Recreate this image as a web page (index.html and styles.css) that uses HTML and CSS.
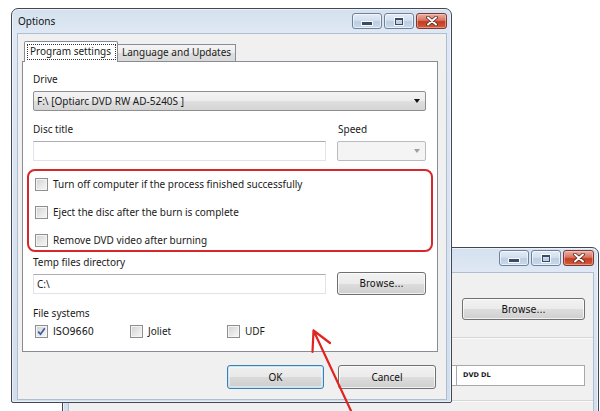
FILE: index.html
```html
<!DOCTYPE html>
<html>
<head>
<meta charset="utf-8">
<link rel="stylesheet" href="styles.css">
</head>
<body>
<div class="desk">

  <div class="win back">
    <div class="titlebar back-tb">
      <div class="caps">
        <div class="cap min"><i></i></div>
        <div class="cap max"><i></i></div>
        <div class="cap close"><svg width="14" height="10" viewBox="0 0 14 10"><path d="M3 1.5 L11 8.5 M11 1.5 L3 8.5" stroke="#5a2620" stroke-width="3.6" stroke-linecap="round"/><path d="M3 1.5 L11 8.5 M11 1.5 L3 8.5" stroke="#fff" stroke-width="2" stroke-linecap="round"/></svg></div>
      </div>
    </div>
    <div class="client back-client">
      <div class="btn back-browse">Browse...</div>
      <div class="sep"></div>
      <div class="dvdrow"><div class="cell-left"></div><div class="cell-dvd">DVD DL</div></div>
      <div class="sep sep2"></div>
    </div>
  </div>

  <div class="win main">
    <div class="titlebar">
      <span class="title">Options</span>
      <div class="caps">
        <div class="cap min"><i></i></div>
        <div class="cap max"><i></i></div>
        <div class="cap close"><svg width="14" height="10" viewBox="0 0 14 10"><path d="M3 1.5 L11 8.5 M11 1.5 L3 8.5" stroke="#5a2620" stroke-width="3.6" stroke-linecap="round"/><path d="M3 1.5 L11 8.5 M11 1.5 L3 8.5" stroke="#fff" stroke-width="2" stroke-linecap="round"/></svg></div>
      </div>
    </div>
    <div class="client">
      <div class="tabs">
        <div class="tab sel"><span class="focus">Program settings</span></div>
        <div class="tab">Language and Updates</div>
      </div>
      <div class="panel">
        <div class="lbl">Drive</div>
        <div class="combo drive"><span>F:\ [Optiarc DVD RW AD-5240S ]</span><i class="tri"></i></div>
        <div class="row2 lblrow"><div class="lbl grow">Disc title</div><div class="lbl speedlbl">Speed</div></div>
        <div class="row2 inrow"><div class="input grow"></div><div class="combo speed"><i class="tri"></i></div></div>
        <div class="hl">
          <div class="cb-row"><span class="cb"></span>Turn off computer if the process finished successfully</div>
          <div class="cb-row"><span class="cb"></span>Eject the disc after the burn is complete</div>
          <div class="cb-row"><span class="cb"></span>Remove DVD video after burning</div>
        </div>
        <div class="lbl temp-lbl">Temp files directory</div>
        <div class="row2 temprow"><div class="input grow">C:\</div><div class="btn browse">Browse...</div></div>
        <div class="lbl fs-lbl">File systems</div>
        <div class="fs-row">
          <div class="cb-row fs fs-iso"><span class="cb"><svg width="11" height="11" viewBox="0 0 11 11"><path d="M2.2 5.6 L4.5 8.2 L8.8 2.2" fill="none" stroke="#3a5ba6" stroke-width="1.7"/></svg></span><span class="iso">ISO9660</span></div>
          <div class="cb-row fs fs-jol"><span class="cb"></span>Joliet</div>
          <div class="cb-row fs"><span class="cb"></span>UDF</div>
        </div>
      </div>
      <div class="actions">
        <div class="btn ok">OK</div>
        <div class="btn cancel">Cancel</div>
      </div>
    </div>
  </div>

  <svg class="arrow" width="600" height="411" viewBox="0 0 600 411">
    <path d="M352 413 L313.5 330.5 M313.5 330.5 L330 343 M313.5 330.5 L312.5 352" fill="none" stroke="#e0241f" stroke-width="2.2" stroke-linecap="round"/>
  </svg>
</div>
</body>
</html>
```

FILE: styles.css
```css
* { box-sizing: border-box; }
html, body { margin: 0; padding: 0; }
body {
  width: 600px;
  height: 411px;
  overflow: hidden;
  background: #fff;
  font-family: "Noto Sans", "Open Sans", sans-serif;
  font-size: 10px;
  color: #1a1a1a;
}
.desk {
  position: relative;
  width: 600px;
  height: 411px;
  overflow: hidden;
}

/* ---------- windows ---------- */
.win {
  position: absolute;
  display: flex;
  flex-direction: column;
  border: 1px solid #414854;
  border-radius: 7px 7px 2px 2px;
  background: linear-gradient(to bottom, #d5e1ef 0, #dfe8f4 24px, #d2deed 100%);
  box-shadow: inset 0 0 0 1px rgba(255,255,255,.55);
}
.main {
  left: 11px;
  top: 8px;
  width: 441px;
  height: 395px;
  padding: 0 4px 2px 5px;
}
.back {
  left: 62px;
  top: 247px;
  width: 537px;
  height: 180px;
  padding: 0 4px 2px 5px;
}

.titlebar {
  height: 24px;
  flex: none;
  display: flex;
  align-items: flex-start;
  justify-content: space-between;
}
.title {
  font-size: 10px;
  color: #111;
  margin: 5px 0 0 1px;
  line-height: 14px;
}
.caps {
  display: flex;
  gap: 2px;
  margin-top: 4px;
  margin-left: auto;
}
.back-tb .caps { margin-top: 2px; margin-right: 0; }
.cap {
  height: 16px;
  width: 30px;
  border: 1px solid #6f819a;
  border-radius: 3px;
  background: linear-gradient(to bottom, #e3ecf7 0, #d2dfee 45%, #bccee4 55%, #c9d9ec 100%);
  box-shadow: inset 0 0 0 1px rgba(255,255,255,.6);
  display: flex;
  align-items: center;
  justify-content: center;
}
.cap.min i {
  display: block;
  width: 10px;
  height: 3px;
  margin-top: 5px;
  background: #3c4a63;
  box-shadow: 0 0 0 1px rgba(255,255,255,.85);
}
.cap.max i {
  display: block;
  width: 8px;
  height: 7px;
  border: 1px solid #3c4a63;
  border-top-width: 2px;
  box-shadow: 0 0 0 1px rgba(255,255,255,.8);
}
.cap.close {
  width: 31px;
  border-color: #7a3a34;
  background: linear-gradient(to bottom, #eab1a6 0, #d9735f 45%, #c33b22 55%, #d45e3f 100%);
  box-shadow: inset 0 0 0 1px rgba(255,220,210,.45);
}

.client {
  flex: none;
  width: 430px;
  height: 367px;
  background: #f0f0f0;
  border: 1px solid #aebdd0;
  display: flex;
  flex-direction: column;
}

/* ---------- tabs ---------- */
.tabs {
  display: flex;
  align-items: flex-end;
  margin: 7px 0 -1px 6px;
  height: 21px;
  position: relative;
  z-index: 1;
}
.tab {
  height: 17px;
  margin-bottom: 1px;
  border: 1px solid #898c95;
  border-bottom: none;
  border-left: none;
  background: linear-gradient(to bottom, #f5f5f5 0, #ebebeb 50%, #dedede 51%, #d9d9d9 100%);
  padding: 0 0 0 4px;
  width: 118px;
  line-height: 15px;
  color: #1a1a1a;
  white-space: nowrap;
}
.tab.sel {
  height: 21px;
  margin-bottom: 0;
  width: 94px;
  border-left: 1px solid #898c95;
  border-radius: 2px 2px 0 0;
  background: #fff;
  padding: 2px 0 0 2px;
}
.focus {
  display: inline-block;
  border: 1px dotted #333;
  padding: 0 4px 0 2px;
  line-height: 13px;
  height: 16px;
}

.panel {
  margin-left: 4px;
  width: 416px;
  height: 291px;
  flex: none;
  background: #fff;
  border: 1px solid #898c95;
  padding: 9px 11px 0 10px;
  display: flex;
  flex-direction: column;
}
.lbl {
  line-height: 14px;
  height: 14px;
  padding-top: 1px;
  white-space: nowrap;
}
.combo {
  position: relative;
  height: 20px;
  border: 1px solid #8e8f8f;
  border-radius: 2px;
  background: linear-gradient(to bottom, #f3f3f3 0, #ececec 50%, #dfdfdf 51%, #d4d4d4 100%);
  display: flex;
  align-items: center;
}
.combo.drive {
  margin-top: 6px;
  padding-left: 3px;
}
.combo .tri {
  margin-left: auto;
  margin-right: 5px;
  width: 0;
  height: 0;
  border-left: 3.5px solid transparent;
  border-right: 3.5px solid transparent;
  border-top: 4px solid #111;
}
.row2 {
  display: flex;
  gap: 11px;
}
.grow { width: 293px; flex: none; }
.lblrow { margin-top: 10px; }
.speedlbl { padding-left: 1px; }
.inrow { margin-top: 6px; }
.input {
  height: 20px;
  border: 1px solid #e2e3ea;
  border-top-color: #abadb3;
  background: #fff;
  padding: 0 3px;
  line-height: 18px;
}
.combo.speed {
  width: 89px;
  height: 20px;
  border-color: #b8bbbf;
  background: #f4f4f4;
}
.combo.speed .tri { border-top-color: #a0a0a0; }

.hl {
  margin: 8px -7px 0 -6px;
  height: 83px;
  border: 2px solid #d6282b;
  border-radius: 8px;
  padding: 3px 0 0 6px;
  display: flex;
  flex-direction: column;
  gap: 8px;
}
.cb-row {
  height: 20px;
  display: flex;
  align-items: center;
  gap: 5px;
  white-space: nowrap;
}
.cb {
  width: 13px;
  height: 13px;
  flex: none;
  border: 1px solid #8e8f8f;
  background: linear-gradient(135deg, #d2d2d2 0, #e9e9e9 60%, #f7f7f7 100%);
  box-shadow: inset 0 0 0 1px #f4f4f4;
  display: flex;
  align-items: center;
  justify-content: center;
}
.temp-lbl { margin-top: 2px; }
.temprow {
  margin-top: 4px;
  align-items: center;
  height: 23px;
}
.btn {
  display: flex;
  align-items: center;
  justify-content: center;
  border: 1px solid #707070;
  border-radius: 3px;
  background: linear-gradient(to bottom, #f2f2f2 0, #ebebeb 50%, #dddddd 51%, #cfcfcf 100%);
  box-shadow: inset 0 0 0 1px rgba(255,255,255,.7);
  color: #111;
  white-space: nowrap;
}
.browse {
  width: 90px;
  height: 23px;
  font-family: "DejaVu Sans", sans-serif;
  font-size: 9.6px;
}
.fs-lbl { margin-top: 10px; }
.fs-row {
  margin-top: 2px;
  display: flex;
  padding-left: 2px;
}
.fs-iso { width: 95px; }
.fs-jol { width: 97px; }
.iso {
  font-family: "DejaVu Sans", sans-serif;
  font-size: 9.6px;
}

.actions {
  margin-top: 13px;
  display: flex;
  justify-content: flex-end;
  gap: 14px;
  padding-right: 10px;
}
.actions .btn {
  height: 24px;
  width: 97px;
}
.actions .ok {
  border-color: #3c7fb1;
  box-shadow: inset 0 0 0 1px #bfe6f9, inset 0 0 0 2px rgba(255,255,255,.4);
  background: linear-gradient(to bottom, #f0f0f0 0, #e8e8e8 50%, #dadada 51%, #cdcdcd 100%);
}
.actions .cancel { width: 98px; }

/* ---------- background window ---------- */
.back-client {
  width: auto;
  height: auto;
  flex: 1;
  align-items: stretch;
}
.back-browse {
  align-self: flex-end;
  margin: 25px 8px 0 0;
  width: 123px;
  height: 22px;
  font-family: "DejaVu Sans", sans-serif;
  font-size: 9.6px;
}
.sep {
  margin-top: 17px;
  background: #d6d6d6;
  border-bottom: 1px solid #fafafa;
  height: 2px;
}
.dvdrow {
  margin-top: 26px;
  height: 21px;
  display: flex;
  margin-right: 8px;
  background: #fff;
  border: 1px solid #a8a8a8;
  border-left: none;
}
.cell-left { flex: 1; border-right: 1px solid #a8a8a8; }
.cell-dvd {
  width: 127px;
  font-family: "DejaVu Sans", sans-serif;
  font-weight: bold;
  font-size: 6.5px;
  line-height: 19px;
  padding-left: 6px;
}
.sep2 { margin-top: 14px; }

.arrow {
  position: absolute;
  left: 0;
  top: 0;
  pointer-events: none;
}
```
